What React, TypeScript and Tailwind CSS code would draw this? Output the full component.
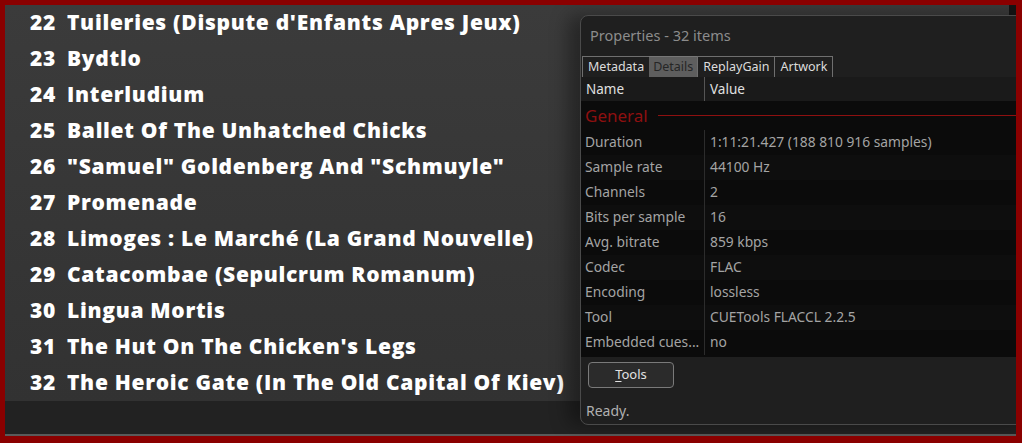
import React from "react";

const tracks = [
  { no: 22, title: "Tuileries (Dispute d'Enfants Apres Jeux)" },
  { no: 23, title: "Bydtlo" },
  { no: 24, title: "Interludium" },
  { no: 25, title: "Ballet Of The Unhatched Chicks" },
  { no: 26, title: "\"Samuel\" Goldenberg And \"Schmuyle\"" },
  { no: 27, title: "Promenade" },
  { no: 28, title: "Limoges : Le Marché (La Grand Nouvelle)" },
  { no: 29, title: "Catacombae (Sepulcrum Romanum)" },
  { no: 30, title: "Lingua Mortis" },
  { no: 31, title: "The Hut On The Chicken's Legs" },
  { no: 32, title: "The Heroic Gate (In The Old Capital Of Kiev)" },
];

const details = [
  ["Duration", "1:11:21.427 (188 810 916 samples)"],
  ["Sample rate", "44100 Hz"],
  ["Channels", "2"],
  ["Bits per sample", "16"],
  ["Avg. bitrate", "859 kbps"],
  ["Codec", "FLAC"],
  ["Encoding", "lossless"],
  ["Tool", "CUETools FLACCL 2.2.5"],
  ["Embedded cues...", "no"],
];

const tabs = ["Metadata", "Details", "ReplayGain", "Artwork"];

const PropertiesWindow = () => {
  return (
    <div className="absolute left-[575px] top-[10px] w-[460px] h-[410px] rounded-[8px] border border-[#4a4a4a] bg-[#1f1f1f] shadow-[-12px_0_18px_rgba(0,0,0,0.35)] flex flex-col overflow-hidden font-['Noto_Sans',sans-serif]">
      <div className="h-[40px] flex items-center pl-[9px] text-[14.5px] text-[#8c8c8c]">
        Properties - 32 items
      </div>
      <div className="flex pl-[1px] h-[21px]">
        {tabs.map((t) => (
          <div
            key={t}
            className={
              t === "Details"
                ? "px-[4px] h-full flex items-center text-[12.5px] text-[#262626] bg-[#5e5e5e] border-t border-[#777]"
                : "px-[5px] h-full flex items-center text-[12.5px] text-[#dcdcdc] border-l border-t border-r border-[#6f6f6f] -mr-[1px]"
            }
          >
            {t}
          </div>
        ))}
      </div>
      <div className="h-[24px] flex items-center bg-[#1a1a1a] text-[13.5px] text-[#e0e0e0]">
        <div className="w-[124px] pl-[5px] border-r border-[#555] h-full flex items-center">Name</div>
        <div className="pl-[5px]">Value</div>
      </div>
      <div className="bg-[#0b0b0b] flex flex-col">
        <div className="h-[29px] flex items-center pl-[4px]">
          <span className="text-[17px] text-[#8e1010] leading-none">General</span>
          <div className="flex-1 h-px bg-[#8e1010] ml-[10px]" />
        </div>
        {details.map(([name, value], i) => (
          <div
            key={name}
            className={`h-[25px] flex items-center text-[13.8px] text-[#a4a4a4] ${i % 2 === 0 ? "bg-[#0b0b0b]" : "bg-[#0e0e0e]"}`}
          >
            <div className="w-[124px] pl-[4px] h-full flex items-center border-r border-[#2c2c2c] whitespace-nowrap overflow-hidden">
              {name}
            </div>
            <div className="pl-[5px]">{value}</div>
          </div>
        ))}
        <div className="h-[2px]" />
      </div>
      <div className="pt-[4px] pl-[7px]">
        <button className="w-[86px] h-[26px] rounded-[4px] border border-[#7a7a7a] bg-[#2b2b2b] text-[13px] text-[#e2e2e2]">
          <span className="underline underline-offset-2">T</span>ools
        </button>
      </div>
      <div className="pt-[12px] pl-[5px] text-[14px] text-[#b0b0b0]">Ready.</div>
    </div>
  );
};

export default function App() {
  return (
    <div className="w-[1022px] h-[443px] bg-[#8a0000] pt-[5px] pl-[5px] pr-[6px] pb-[7px] overflow-hidden">
      <div className="relative w-full h-full flex flex-col overflow-hidden">
        <div className="h-[396px] bg-gradient-to-b from-[#3b3b3b] to-[#323232] flex flex-col font-['Open_Sans',sans-serif]">
          {tracks.map((t) => (
            <div key={t.no} className="h-[36px] flex items-center text-white font-extrabold text-[21px] tracking-[0.7px] whitespace-nowrap">
              <span className="w-[51px] text-right">{t.no}</span>
              <span className="ml-[11px]">{t.title}</span>
            </div>
          ))}
        </div>
        <div className="flex-1 bg-[#222]" />
        <div className="h-[2px] bg-[#5a5a5a]" />
        <div className="absolute right-0 top-0 w-[7px] h-[10px] bg-[#151515]" />
        <PropertiesWindow />
      </div>
    </div>
  );
}
